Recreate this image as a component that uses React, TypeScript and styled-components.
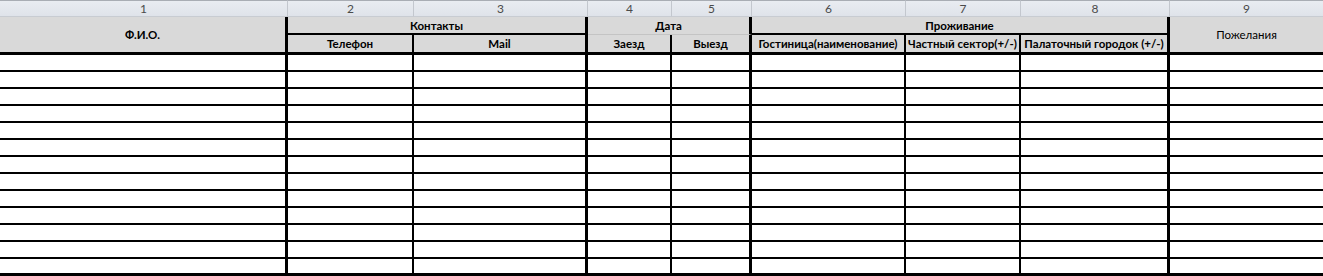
import styled, { createGlobalStyle } from "styled-components";

type Line = "none" | "thin" | "thick" | "soft";

const lineCss = (line: Line = "none") => {
  if (line === "thick") return "3px solid #000";
  if (line === "thin") return "2px solid #000";
  if (line === "soft") return "1px solid #c4c4c4";
  return "0 none";
};

// widths of the nine sheet columns, right border included
const columns = [288, 126, 174, 84, 80, 154, 115, 149, 153];

// which vertical line closes each column
const rightLines: Line[] = ["thick", "thin", "thick", "thin", "thick", "thin", "thin", "thick", "none"];

const ROWS = 13;

const GlobalStyle = createGlobalStyle`
  html, body {
    margin: 0;
    padding: 0;
    background: #fff;
  }
  body {
    font-family: Lato, "Open Sans", "Liberation Sans", sans-serif;
  }
`;

const Sheet = styled.div`
  display: grid;
  grid-template-columns: ${columns.map((w) => `${w}px`).join(" ")};
  grid-template-rows: 17px 18px 20px repeat(${ROWS}, 17px);
  width: 1323px;
  background: #fff;
`;

const ColNumber = styled.div<{ $last?: boolean }>`
  box-sizing: border-box;
  display: flex;
  align-items: center;
  justify-content: center;
  background: linear-gradient(#e9ecf1, #dfe3ea);
  border-top: 1px solid #a9adb4;
  border-bottom: 1px solid #c8ccd2;
  border-right: ${(p) => (p.$last ? "0 none" : "1px solid #c3c7ce")};
  color: #4a4a4a;
  font-size: 12px;
  line-height: 1;
`;

const HeadCell = styled.div<{
  $col: string;
  $row: string;
  $right?: Line;
  $bottom?: Line;
  $regular?: boolean;
}>`
  box-sizing: border-box;
  grid-column: ${(p) => p.$col};
  grid-row: ${(p) => p.$row};
  display: flex;
  align-items: center;
  justify-content: center;
  padding-top: 1px;
  background: #d9d9d9;
  border-right: ${(p) => lineCss(p.$right)};
  border-bottom: ${(p) => lineCss(p.$bottom)};
  color: #000;
  font-size: 11.5px;
  font-weight: ${(p) => (p.$regular ? 400 : 700)};
  white-space: nowrap;
  line-height: 1;
`;

const Cell = styled.div<{ $right: Line; $last: boolean }>`
  box-sizing: border-box;
  background: #fff;
  border-right: ${(p) => lineCss(p.$right)};
  border-bottom: ${(p) => lineCss(p.$last ? "thick" : "thin")};
`;

const groups = [
  { label: "Ф.И.О.", col: "1", row: "2 / 4", right: "thick", bottom: "thick" },
  { label: "Контакты", col: "2 / 4", row: "2", right: "thick", bottom: "thin" },
  { label: "Дата", col: "4 / 6", row: "2", right: "thick", bottom: "soft" },
  { label: "Проживание", col: "6 / 9", row: "2", right: "thick", bottom: "thin" },
  { label: "Пожелания", col: "9", row: "2 / 4", right: "none", bottom: "thick", regular: true },
] as const;

const subHeads = [
  { label: "Телефон", col: 2 },
  { label: "Mail", col: 3 },
  { label: "Заезд", col: 4 },
  { label: "Выезд", col: 5 },
  { label: "Гостиница(наименование)", col: 6 },
  { label: "Частный сектор(+/-)", col: 7 },
  { label: "Палаточный городок (+/-)", col: 8 },
];

export default function App() {
  return (
    <>
      <GlobalStyle />
      <Sheet>
        {columns.map((_, i) => (
          <ColNumber key={`n${i}`} $last={i === columns.length - 1}>
            {i + 1}
          </ColNumber>
        ))}

        {groups.map((g) => (
          <HeadCell
            key={g.label}
            $col={g.col}
            $row={g.row}
            $right={g.right}
            $bottom={g.bottom}
            $regular={"regular" in g}
          >
            {g.label}
          </HeadCell>
        ))}

        {subHeads.map((s) => (
          <HeadCell
            key={s.label}
            $col={String(s.col)}
            $row="3"
            $right={rightLines[s.col - 1]}
            $bottom="thick"
          >
            {s.label}
          </HeadCell>
        ))}

        {Array.from({ length: ROWS }).map((_, r) =>
          columns.map((_, c) => (
            <Cell key={`c${r}-${c}`} $right={rightLines[c]} $last={r === ROWS - 1} />
          ))
        )}
      </Sheet>
    </>
  );
}
